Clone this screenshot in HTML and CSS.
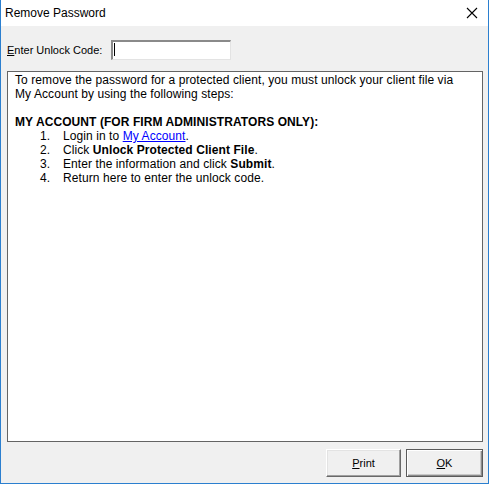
FILE: index.html
```html
<!DOCTYPE html>
<html>
	<head>
		<meta charset="UTF-8">
		<title>Remove Password</title>
		<link rel="stylesheet" href="styles.css">
	</head>
	<body>
		<section class="window">
			<header class="titlebar">
				<span class="title">Remove Password</span>
				<a href="javascript:;" class="close">
					<svg width="12" height="12" viewBox="0 0 12 12"><path d="M1 1L11 11M11 1L1 11" stroke="#000" stroke-width="1.1" fill="none"/></svg>
				</a>
			</header>
			<div class="body">
				<div class="code-row">
					<label class="label"><u>E</u>nter Unlock Code:</label>
					<div class="input"><span class="caret"></span></div>
				</div>
				<div class="panel">
					<p>To remove the password for a protected client, you must unlock your client file via<br>My Account by using the following steps:</p>
					<p class="head">MY ACCOUNT (FOR FIRM ADMINISTRATORS ONLY):</p>
					<ol class="steps">
						<li><span>1.</span><span>Login in to <a href="javascript:;">My Account</a>.</span></li>
						<li><span>2.</span><span>Click <b>Unlock Protected Client File</b>.</span></li>
						<li><span>3.</span><span>Enter the information and click <b>Submit</b>.</span></li>
						<li><span>4.</span><span>Return here to enter the unlock code.</span></li>
					</ol>
				</div>
				<div class="buttons">
					<a href="javascript:;" class="btn"><u>P</u>rint</a>
					<a href="javascript:;" class="btn default"><u>O</u>K</a>
				</div>
			</div>
		</section>
	</body>
</html>
```
FILE: styles.css
```css
body{
	margin: 0;
	font-family: "Liberation Sans", Arial, sans-serif;
}
.window{
	width: 489px;
	height: 484px;
	box-sizing: border-box;
	border: 1px solid #2b7fcf;
	border-top: none;
	display: flex;
	flex-direction: column;
	background: #f0f0f0;
}
.titlebar{
	height: 26px;
	background: #fff;
	display: flex;
	align-items: center;
	justify-content: space-between;
	padding: 0 10px 0 4px;
	font-size: 12px;
}
.close{
	display: block;
	width: 12px;
	height: 12px;
	margin-bottom: 1px;
}
.close svg{
	display: block;
}
.body{
	flex: 1;
	display: flex;
	flex-direction: column;
	padding: 14px 5px 6px 6px;
}
.code-row{
	display: flex;
	align-items: center;
	height: 20px;
	font-size: 11px;
}
.label{
	width: 104px;
	color: #000;
}
.input{
	width: 120px;
	height: 20px;
	box-sizing: border-box;
	background: #fff;
	border-top: 2px solid #8a8a8a;
	border-left: 2px solid #8a8a8a;
	border-right: 1px solid #e3e3e3;
	border-bottom: 1px solid #e3e3e3;
	padding: 1px 0 0 1px;
}
.caret{
	display: block;
	width: 1px;
	height: 13px;
	background: #000;
}
.panel{
	flex: 1;
	margin-top: 11px;
	border: 1px solid #646464;
	background: #fff;
	padding: 1px 7px;
	font-size: 12px;
	line-height: 14px;
	letter-spacing: 0.08px;
	color: #000;
}
.panel p{
	margin: 0 0 14px;
}
.panel .head{
	font-weight: bold;
	margin: 0;
}
.steps{
	margin: 0;
	padding: 0 0 0 25px;
	list-style: none;
}
.steps li{
	display: grid;
	grid-template-columns: 23px auto;
}
.steps a{
	color: #0000ff;
}
.buttons{
	display: flex;
	justify-content: flex-end;
	gap: 5px;
	margin-top: 7px;
}
.btn{
	width: 75px;
	height: 28px;
	box-sizing: border-box;
	display: flex;
	align-items: center;
	justify-content: center;
	font-size: 11px;
	color: #000;
	text-decoration: none;
	background: #f0f0f0;
	border: 1px solid;
	border-color: #fff #696969 #696969 #fff;
	box-shadow: inset -1px -1px 0 #a0a0a0, inset 1px 1px 0 #e3e3e3;
}
.default{
	width: 77px;
	border-color: #5a5a5a;
	box-shadow: inset 1px 1px 0 #fff, inset -1px -1px 0 #8a8a8a, inset -2px -2px 0 #c8c8c8;
}
```
